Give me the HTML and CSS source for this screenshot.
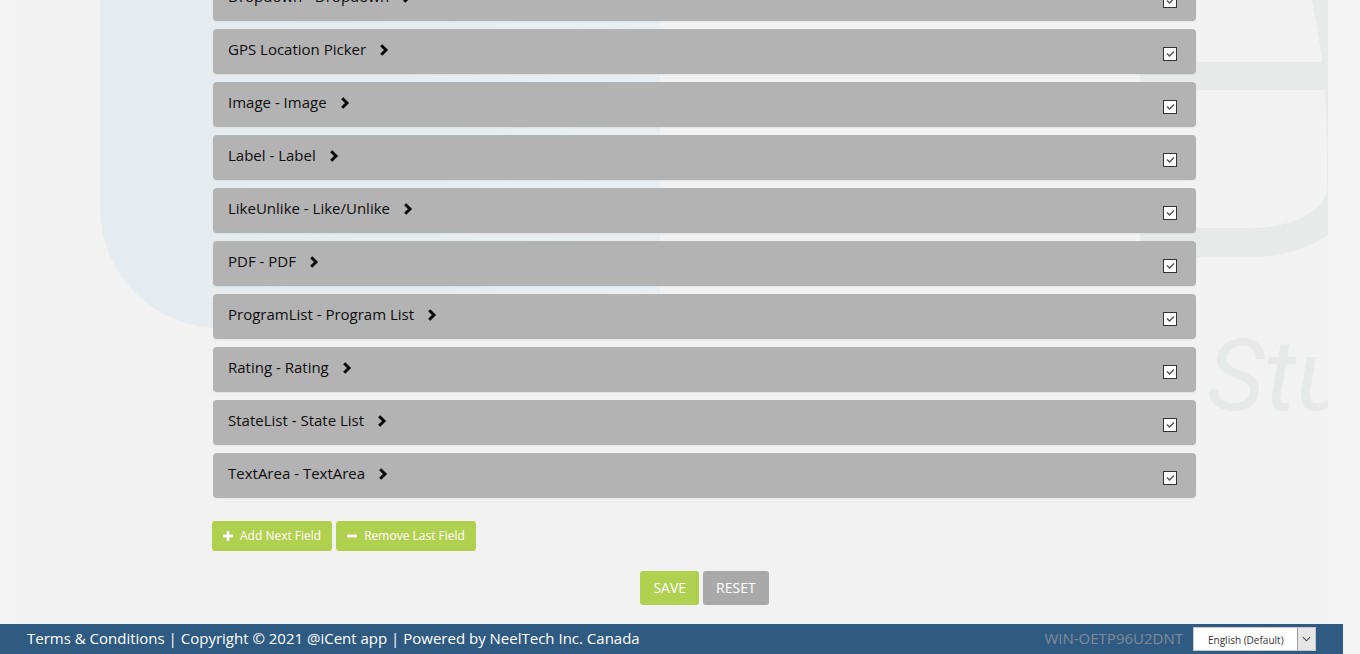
FILE: index.html
```html
<!DOCTYPE html>
<html lang="en">
<head>
<meta charset="utf-8">
<title>Form Fields</title>
<link rel="stylesheet" href="styles.css">
</head>
<body>
<div class="page">
  <div class="main">
    <div class="gutter-left"></div>
    <div class="panel">
      <div class="wm-blue"></div>
      <div class="wm-ring"></div>
      <div class="wm-bar"></div>
      <div class="wm-text">Stu</div>
      <div class="content">
        <div class="fields">
          <div class="field-row"><span class="field-label">Dropdown - Dropdown</span><svg class="chev" viewBox="0 0 10 14"><path d="M2.2 2.2l4.8 4.8-4.8 4.8"/></svg><span class="check"><svg viewBox="0 0 11 11"><path d="M2 5.5l2.5 2.5 4.5-4.5" /></svg></span></div>
          <div class="field-row"><span class="field-label">GPS Location Picker</span><svg class="chev" viewBox="0 0 10 14"><path d="M2.2 2.2l4.8 4.8-4.8 4.8"/></svg><span class="check"><svg viewBox="0 0 11 11"><path d="M2 5.5l2.5 2.5 4.5-4.5" /></svg></span></div>
          <div class="field-row"><span class="field-label">Image - Image</span><svg class="chev" viewBox="0 0 10 14"><path d="M2.2 2.2l4.8 4.8-4.8 4.8"/></svg><span class="check"><svg viewBox="0 0 11 11"><path d="M2 5.5l2.5 2.5 4.5-4.5" /></svg></span></div>
          <div class="field-row"><span class="field-label">Label - Label</span><svg class="chev" viewBox="0 0 10 14"><path d="M2.2 2.2l4.8 4.8-4.8 4.8"/></svg><span class="check"><svg viewBox="0 0 11 11"><path d="M2 5.5l2.5 2.5 4.5-4.5" /></svg></span></div>
          <div class="field-row"><span class="field-label">LikeUnlike - Like/Unlike</span><svg class="chev" viewBox="0 0 10 14"><path d="M2.2 2.2l4.8 4.8-4.8 4.8"/></svg><span class="check"><svg viewBox="0 0 11 11"><path d="M2 5.5l2.5 2.5 4.5-4.5" /></svg></span></div>
          <div class="field-row"><span class="field-label">PDF - PDF</span><svg class="chev" viewBox="0 0 10 14"><path d="M2.2 2.2l4.8 4.8-4.8 4.8"/></svg><span class="check"><svg viewBox="0 0 11 11"><path d="M2 5.5l2.5 2.5 4.5-4.5" /></svg></span></div>
          <div class="field-row"><span class="field-label">ProgramList - Program List</span><svg class="chev" viewBox="0 0 10 14"><path d="M2.2 2.2l4.8 4.8-4.8 4.8"/></svg><span class="check"><svg viewBox="0 0 11 11"><path d="M2 5.5l2.5 2.5 4.5-4.5" /></svg></span></div>
          <div class="field-row"><span class="field-label">Rating - Rating</span><svg class="chev" viewBox="0 0 10 14"><path d="M2.2 2.2l4.8 4.8-4.8 4.8"/></svg><span class="check"><svg viewBox="0 0 11 11"><path d="M2 5.5l2.5 2.5 4.5-4.5" /></svg></span></div>
          <div class="field-row"><span class="field-label">StateList - State List</span><svg class="chev" viewBox="0 0 10 14"><path d="M2.2 2.2l4.8 4.8-4.8 4.8"/></svg><span class="check"><svg viewBox="0 0 11 11"><path d="M2 5.5l2.5 2.5 4.5-4.5" /></svg></span></div>
          <div class="field-row"><span class="field-label">TextArea - TextArea</span><svg class="chev" viewBox="0 0 10 14"><path d="M2.2 2.2l4.8 4.8-4.8 4.8"/></svg><span class="check"><svg viewBox="0 0 11 11"><path d="M2 5.5l2.5 2.5 4.5-4.5" /></svg></span></div>
        </div>
        <div class="field-actions">
          <button class="btn-green btn-small"><svg class="ico" viewBox="0 0 10 10"><rect x="3.6" y="0" width="2.8" height="10"/><rect x="0" y="3.6" width="10" height="2.8"/></svg>Add Next Field</button>
          <button class="btn-green btn-small"><svg class="ico" viewBox="0 0 10 10"><rect x="0" y="3.6" width="10" height="2.8"/></svg>Remove Last Field</button>
        </div>
        <div class="form-actions">
          <button class="btn-green btn-big">SAVE</button>
          <button class="btn-grey btn-big">RESET</button>
        </div>
      </div>
    </div>
    <div class="gutter-right"></div>
  </div>
  <footer class="footer">
    <div class="footer-text">Terms &amp; Conditions | Copyright © 2021 @iCent app | Powered by NeelTech Inc. Canada</div>
    <div class="footer-right">
      <span class="host">WIN-OETP96U2DNT</span>
      <div class="lang-select"><span class="lang-value">English (Default)</span><span class="lang-arrow"><svg viewBox="0 0 10 6"><path d="M1 1l4 4 4-4"/></svg></span></div>
    </div>
  </footer>
</div>
</body>
</html>
```

FILE: styles.css
```css
* { box-sizing: border-box; }
html, body { margin: 0; padding: 0; }
body {
  background: #f4f4f4;
  font-family: "Open Sans", "Noto Sans", sans-serif;
  width: 1360px;
  height: 654px;
  overflow: hidden;
}
.page { display: flex; flex-direction: column; height: 654px; }
.main { display: flex; height: 624px; }
.gutter-left { width: 15px; background: #f4f4f4; }
.gutter-right { flex: 1; background: #f4f4f4; }
.panel {
  width: 1313px;
  height: 624px;
  background: #f2f2f2;
  position: relative;
  overflow: hidden;
}
.wm-blue {
  position: absolute;
  left: 85px;
  top: -120px;
  width: 560px;
  height: 448px;
  background: linear-gradient(90deg, #e5ebee 0%, #e7edef 60%, #eaeef0 100%);
  border-bottom-left-radius: 120px;
}
.wm-ring {
  position: absolute;
  left: 1125px;
  top: -150px;
  width: 216px;
  height: 407px;
  border: 29px solid #e8e9e9;
  border-left: 0;
  border-radius: 0 120px 105px 0 / 0 300px 70px 0;
}
.wm-bar {
  position: absolute;
  left: 1125px;
  top: 62px;
  width: 200px;
  height: 28px;
  background: #e8e9e9;
}
.wm-text {
  position: absolute;
  left: 1192px;
  top: 316px;
  font-family: Roboto, sans-serif;
  font-style: italic;
  font-weight: 400;
  font-size: 100px;
  line-height: 120px;
  color: #e7e8e8;
}
.content {
  position: relative;
  z-index: 1;
  padding-left: 198px;
  width: 1181px;
}
.fields {
  display: flex;
  flex-direction: column;
  gap: 8px;
  margin-top: -24px;
}
.field-row {
  height: 45px;
  background: #b3b3b3;
  border-radius: 4px;
  display: flex;
  align-items: center;
  padding: 0 19px 0 15px;
  box-shadow: 0 1px 2px rgba(0,0,0,0.06);
}
.field-label {
  font-size: 15px;
  color: #0e0e0e;
  padding-bottom: 6px;
}
.chev {
  width: 10px;
  height: 14px;
  margin-left: 13px;
  margin-bottom: 3px;
  fill: none;
  stroke: #0a0a0a;
  stroke-width: 3;
}
.check {
  margin-left: auto;
  width: 14px;
  height: 14px;
  background: #fff;
  border: 1px solid #333;
  display: flex;
  align-items: center;
  justify-content: center;
  margin-top: 4px;
}
.check svg { width: 11px; height: 11px; fill: none; stroke: #555; stroke-width: 1.5; }
.field-actions {
  display: flex;
  gap: 4px;
  margin-top: 23px;
  margin-left: -1px;
}
button {
  font-family: "Open Sans", "Noto Sans", sans-serif;
  border: none;
  color: #fff;
  cursor: pointer;
  display: flex;
  align-items: center;
  justify-content: center;
}
.btn-green { background: #b0d04f; }
.btn-grey { background: #a9a9a9; }
.btn-small {
  height: 30px;
  border-radius: 3px;
  font-size: 12px;
  padding: 0 11px 1px;
}
.ico { width: 10px; height: 10px; fill: #fff; margin-right: 7px; }
.form-actions {
  display: flex;
  justify-content: center;
  gap: 4px;
  margin-top: 20px;
}
.btn-big {
  height: 34px;
  border-radius: 3px;
  font-size: 14px;
  padding: 0 13px 1px;
}
.footer {
  height: 30px;
  width: 1343px;
  background: #2f5b83;
  display: flex;
  align-items: center;
  justify-content: space-between;
  padding: 0 27px 2px;
}
.footer-text { color: #fff; font-size: 15px; }
.footer-right { display: flex; align-items: center; gap: 10px; }
.host { color: #7f8b96; font-size: 15px; }
.lang-select {
  width: 123px;
  height: 24px;
  background: #fff;
  border: 1px solid #c8c8c8;
  display: flex;
  align-items: center;
  justify-content: space-between;
  margin-top: 2px;
}
.lang-value { font-size: 10px; color: #333; padding-left: 14px; padding-top: 1px; }
.lang-arrow {
  width: 18px;
  height: 22px;
  background: #e6e6e6;
  border-left: 1px solid #999;
  display: flex;
  align-items: center;
  justify-content: center;
}
.lang-arrow svg { width: 9px; height: 6px; fill: none; stroke: #444; stroke-width: 1.2; }
```
